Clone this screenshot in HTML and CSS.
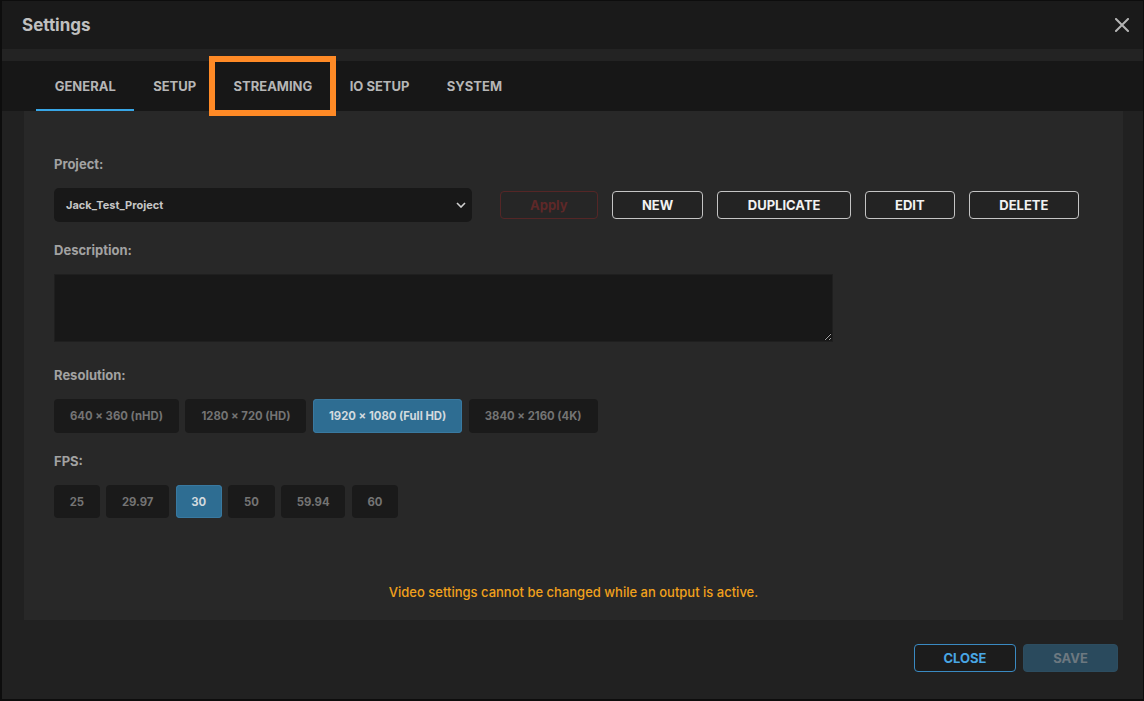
FILE: index.html
```html
<!DOCTYPE html>
<html>
<head>
<meta charset="utf-8">
<title>Settings</title>
<link rel="stylesheet" href="styles.css">
</head>
<body>
<div class="dialog">
  <div class="header">
    <div class="title">Settings</div>
    <button class="close-x" aria-label="Close">
      <svg width="14" height="14" viewBox="0 0 14 14"><path d="M1 1L13 13M13 1L1 13" stroke="#b4b4b4" stroke-width="2" stroke-linecap="square"/></svg>
    </button>
  </div>
  <div class="strip"></div>
  <div class="tabs">
    <div class="tab active">GENERAL</div>
    <div class="tab">SETUP</div>
    <div class="tab">STREAMING</div>
    <div class="tab">IO SETUP</div>
    <div class="tab">SYSTEM</div>
  </div>
  <div class="panel">
    <div class="label">Project:</div>
    <div class="project-row">
      <div class="select">
        <span>Jack_Test_Project</span>
        <svg width="10" height="6" viewBox="0 0 10 6"><path d="M1 1L5 5L9 1" fill="none" stroke="#d0d0d0" stroke-width="1.6"/></svg>
      </div>
      <button class="btn apply">Apply</button>
      <button class="btn">NEW</button>
      <button class="btn">DUPLICATE</button>
      <button class="btn">EDIT</button>
      <button class="btn">DELETE</button>
    </div>
    <div class="label">Description:</div>
    <textarea class="desc"></textarea>
    <div class="label">Resolution:</div>
    <div class="chips res">
      <div class="chip">640 × 360 (nHD)</div>
      <div class="chip">1280 × 720 (HD)</div>
      <div class="chip on">1920 × 1080 (Full HD)</div>
      <div class="chip">3840 × 2160 (4K)</div>
    </div>
    <div class="label">FPS:</div>
    <div class="chips fps">
      <div class="chip">25</div>
      <div class="chip">29.97</div>
      <div class="chip on">30</div>
      <div class="chip">50</div>
      <div class="chip">59.94</div>
      <div class="chip">60</div>
    </div>
    <div class="warning">Video settings cannot be changed while an output is active.</div>
  </div>
  <div class="footer">
    <button class="fbtn close">CLOSE</button>
    <button class="fbtn save">SAVE</button>
  </div>
</div>
<div class="highlight"></div>
</body>
</html>
```
FILE: styles.css
```css
html, body {
  margin: 0;
  padding: 0;
  background: #0d0d0d;
  font-family: Inter, Roboto, "Liberation Sans", sans-serif;
}
body {
  width: 1144px;
  height: 701px;
  overflow: hidden;
  position: relative;
}
.dialog {
  margin: 1px 1px 0 2px;
  width: 1141px;
  height: 698px;
  background: #212121;
  display: flex;
  flex-direction: column;
}
.header {
  height: 48px;
  flex: none;
  background: #1a1a1a;
  display: flex;
  align-items: center;
  justify-content: space-between;
  padding: 0 14px 0 20px;
}
.title {
  font-size: 17px;
  font-weight: 700;
  color: #c0c0c0;
}
.close-x {
  background: none;
  border: none;
  padding: 0;
  width: 14px;
  height: 14px;
  display: flex;
  margin-top: -1px;
}
.strip {
  height: 12px;
  flex: none;
  background: #232323;
}
.tabs {
  height: 50px;
  flex: none;
  background: #171717;
  display: flex;
  padding-left: 34px;
}
.tab {
  box-sizing: border-box;
  height: 50px;
  padding: 1px 18.7px 0;
  display: flex;
  align-items: center;
  font-size: 13px;
  font-weight: 700;
  color: #b6b6b6;
  border-bottom: 2px solid transparent;
}
.tab.active {
  border-bottom: 2px solid #38a6e6;
}
.panel {
  flex: 1;
  margin: 0 20px 0 22px;
  background: #282828;
  padding: 45px 30px 20px;
  display: flex;
  flex-direction: column;
  align-items: flex-start;
}
.label {
  font-size: 13px;
  line-height: 16px;
  font-weight: 700;
  color: #a2a2a2;
  margin-bottom: 16px;
}
.project-row {
  display: flex;
  align-items: center;
  gap: 14px;
  margin-bottom: 20px;
}
.select {
  box-sizing: border-box;
  width: 418px;
  height: 34px;
  background: #181818;
  border-radius: 5px;
  display: flex;
  align-items: center;
  justify-content: space-between;
  padding: 0 6px 0 12px;
  font-size: 11px;
  font-weight: 700;
  color: #c6c6c6;
  margin-right: 14px;
}
.btn {
  height: 28px;
  padding: 0 29.3px;
  background: #232323;
  border: 1px solid #c4c4c4;
  border-radius: 4px;
  font-family: Inter, Roboto, "Liberation Sans", sans-serif;
  font-size: 13px;
  font-weight: 700;
  color: #f2f2f2;
}
.btn.apply {
  padding: 0 29px;
  border-color: #552626;
  color: #5e2828;
  background: #262626;
}
.desc {
  display: block;
  box-sizing: border-box;
  width: 779px;
  height: 68px;
  background: #181818;
  border: 1px solid #1f1f1f;
  border-radius: 0;
  margin: 0 0 25px;
  resize: vertical;
  color: #ccc;
  color-scheme: dark;
}
.chips {
  display: flex;
  gap: 6.5px;
  margin-bottom: 20px;
}
.chip {
  box-sizing: border-box;
  height: 34px;
  padding: 0 16px;
  display: flex;
  align-items: center;
  background: #1a1a1a;
  border-radius: 4px;
  font-size: 11.3px;
  font-weight: 700;
  color: #747474;
}
.fps .chip {
  height: 33px;
  padding: 0 15.7px;
}
.chip.on {
  background: #2e6d92;
  color: #d2dadf;
  box-shadow: inset 0 0 0 1px #3979a0;
}
.warning {
  margin-top: auto;
  align-self: stretch;
  text-align: center;
  font-size: 13px;
  line-height: 16px;
  font-weight: 500;
  color: #f1a11c;
}
.footer {
  height: 79px;
  flex: none;
  display: flex;
  justify-content: flex-end;
  align-items: flex-start;
  gap: 7px;
  padding: 24px 25px 0 0;
  box-sizing: border-box;
}
.fbtn {
  height: 28px;
  border-radius: 4px;
  font-family: Inter, Roboto, "Liberation Sans", sans-serif;
  font-size: 13px;
  font-weight: 700;
}
.fbtn.close {
  width: 102px;
  background: #1c1c1c;
  border: 1px solid #3a8ac2;
  color: #48a6e4;
}
.fbtn.save {
  width: 95px;
  background: #2a4a5d;
  border: 1px solid #2d4d60;
  color: #6c7880;
}
.highlight {
  position: absolute;
  left: 209px;
  top: 56px;
  width: 127px;
  height: 60px;
  box-sizing: border-box;
  border: 6px solid #ff8a26;
}
```
